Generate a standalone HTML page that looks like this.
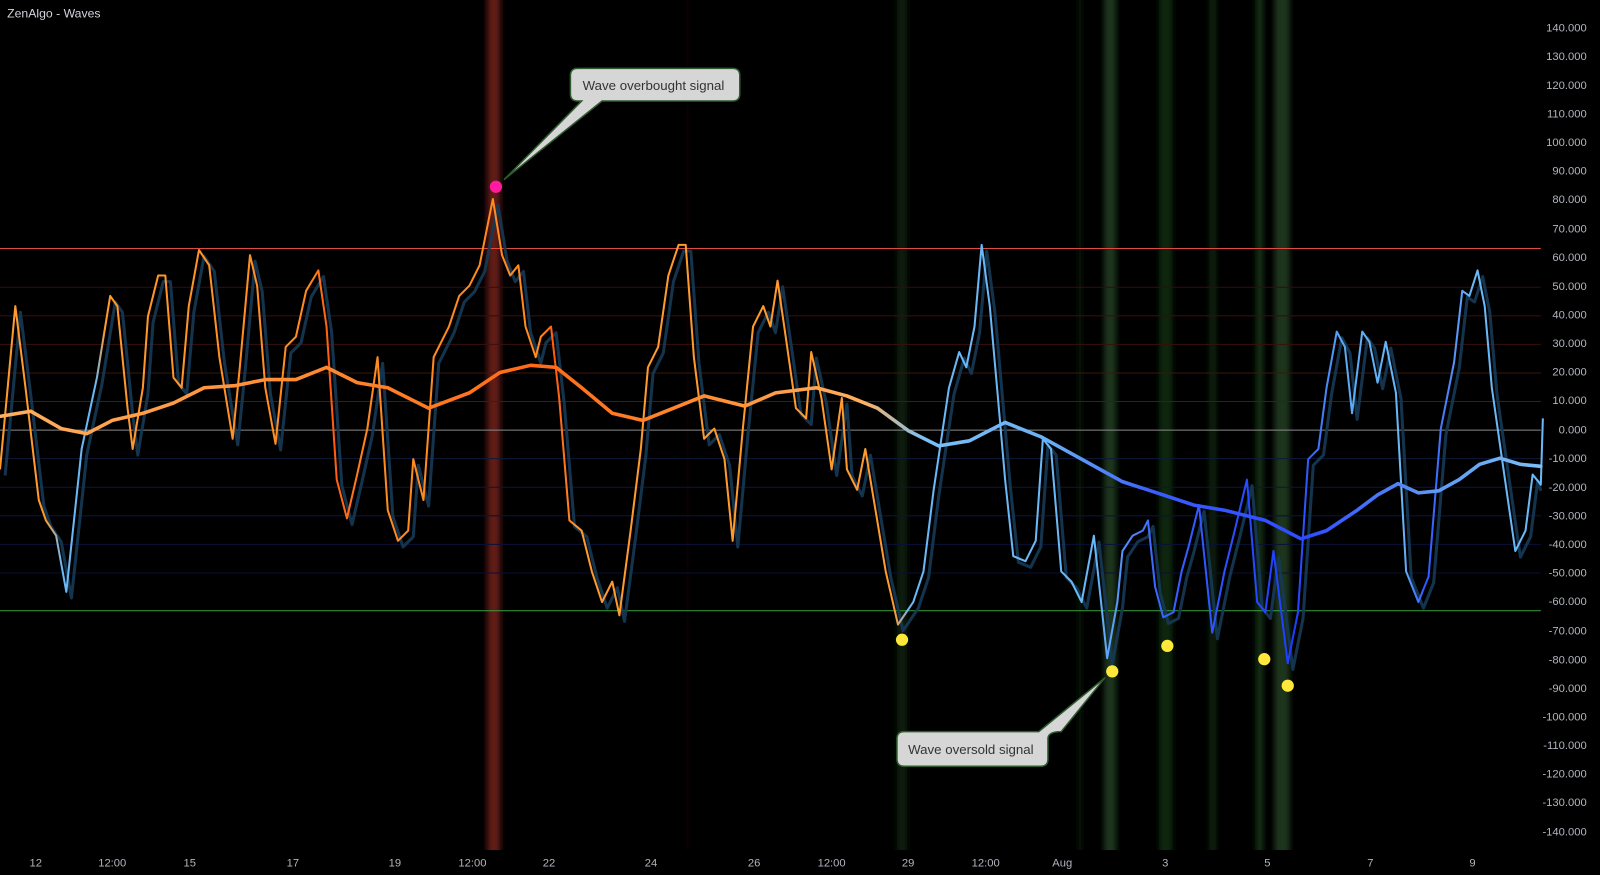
<!DOCTYPE html>
<html><head><meta charset="utf-8"><style>
html,body{margin:0;padding:0;background:#000;width:1600px;height:875px;overflow:hidden;font-family:"Liberation Sans",sans-serif}
svg{position:absolute;left:0;top:0}
</style></head><body>
<svg width="1600" height="875" viewBox="0 0 1568 857.5" preserveAspectRatio="none">
<defs>
<filter id="bl" x="-50%" y="0" width="200%" height="100%"><feGaussianBlur stdDeviation="2.5 0"/></filter>
<linearGradient id="fg" gradientUnits="userSpaceOnUse" x1="0" y1="0" x2="1510" y2="0">
<stop offset="0" stop-color="#ff9a2e"/>
<stop offset="0.03" stop-color="#ff9a2e"/>
<stop offset="0.04" stop-color="#6ab8f5"/>
<stop offset="0.062" stop-color="#6ab8f5"/>
<stop offset="0.068" stop-color="#ff9a2e"/>
<stop offset="0.2" stop-color="#ff8a20"/>
<stop offset="0.215" stop-color="#ff5a10"/>
<stop offset="0.24" stop-color="#ff8a20"/>
<stop offset="0.35" stop-color="#ff8a20"/>
<stop offset="0.36" stop-color="#ff5a10"/>
<stop offset="0.375" stop-color="#ff9a2e"/>
<stop offset="0.58" stop-color="#ff9a2e"/>
<stop offset="0.59" stop-color="#6ab8f5"/>
<stop offset="0.71" stop-color="#6ab8f5"/>
<stop offset="0.75" stop-color="#3a66ff"/>
<stop offset="0.84" stop-color="#1e3cff"/>
<stop offset="0.87" stop-color="#5aa8f5"/>
<stop offset="0.91" stop-color="#6ab8f5"/>
<stop offset="0.925" stop-color="#2e55ff"/>
<stop offset="0.955" stop-color="#6ab8f5"/>
<stop offset="1" stop-color="#6ab8f5"/>
</linearGradient>
<linearGradient id="sg" gradientUnits="userSpaceOnUse" x1="0" y1="0" x2="1510" y2="0">
<stop offset="0" stop-color="#ffb060"/>
<stop offset="0.2" stop-color="#ff8a30"/>
<stop offset="0.35" stop-color="#ff6a15"/>
<stop offset="0.45" stop-color="#ff8a30"/>
<stop offset="0.56" stop-color="#ffb060"/>
<stop offset="0.6" stop-color="#7cc0f5"/>
<stop offset="0.68" stop-color="#6ab0f5"/>
<stop offset="0.75" stop-color="#3a5cff"/>
<stop offset="0.85" stop-color="#2e4cff"/>
<stop offset="0.92" stop-color="#5a90f5"/>
<stop offset="1" stop-color="#7cc0f5"/>
</linearGradient>
</defs>
<g filter="url(#bl)">
<rect x="477" y="0" width="14" height="833" fill="#5a1a14" opacity="0.85"/>
<rect x="481" y="0" width="6" height="833" fill="#6e221a" opacity="0.8"/>
<rect x="879" y="0" width="10" height="833" fill="#0c1f0c"/>
<rect x="1082" y="0" width="12" height="833" fill="#1a341a"/>
<rect x="1136" y="0" width="13" height="833" fill="#112611"/>
<rect x="1185" y="0" width="7" height="833" fill="#0e200e"/>
<rect x="1231" y="0" width="7" height="833" fill="#163016"/>
<rect x="1249" y="0" width="15" height="833" fill="#1a341a"/>
<rect x="1056" y="0" width="5" height="833" fill="#071207"/>
<rect x="672" y="0" width="4" height="833" fill="#0a0606"/>
</g>
<g stroke-width="1">
<line x1="0" x2="1510" y1="281.5" y2="281.5" stroke="#3a0a0a"/>
<line x1="0" x2="1510" y1="309.5" y2="309.5" stroke="#3a0c0a"/>
<line x1="0" x2="1510" y1="337.5" y2="337.5" stroke="#3a100a"/>
<line x1="0" x2="1510" y1="365.5" y2="365.5" stroke="#3a180a"/>
<line x1="0" x2="1510" y1="393.5" y2="393.5" stroke="#3a200e"/>
<line x1="0" x2="1510" y1="421.5" y2="421.5" stroke="#8a8a8a"/>
<line x1="0" x2="1510" y1="449.5" y2="449.5" stroke="#0e1a3a"/>
<line x1="0" x2="1510" y1="477.5" y2="477.5" stroke="#0c163a"/>
<line x1="0" x2="1510" y1="505.5" y2="505.5" stroke="#0a123a"/>
<line x1="0" x2="1510" y1="533.5" y2="533.5" stroke="#0a103a"/>
<line x1="0" x2="1510" y1="561.5" y2="561.5" stroke="#0a0e3a"/>
<line x1="0" x2="1510" y1="243.5" y2="243.5" stroke="#e04a40"/>
<line x1="0" x2="1510" y1="598.5" y2="598.5" stroke="#3aa040"/>
</g>
<polyline fill="none" stroke="#163a55" stroke-width="3" opacity="0.9" stroke-linejoin="round" transform="translate(5,6)" points="0,460 15,300 25,380 38,490 45,510 55,525 65,580 80,440 95,370 108,290 115,300 125,400 130,440 140,380 145,310 155,270 162,270 170,370 178,380 185,300 195,245 205,260 215,350 228,430 235,360 245,250 252,280 260,380 270,435 280,340 290,330 300,285 312,265 320,320 330,470 340,508 350,465 360,420 370,350 380,500 390,530 400,520 405,450 415,490 425,350 440,320 450,290 460,280 470,260 483,195 492,250 500,270 508,260 515,320 525,350 530,330 540,320 548,390 558,510 570,520 580,560 590,590 600,570 607,603 618,520 628,440 635,360 645,340 655,270 665,240 672,240 680,350 690,430 700,420 710,450 718,530 728,420 738,320 748,300 755,320 762,275 770,330 780,400 790,410 795,345 805,390 815,460 825,390 830,460 840,480 848,440 858,500 868,560 880,612 895,590 905,560 915,480 930,380 940,345 947,360 955,320 962,240 970,300 978,390 985,470 993,545 1005,550 1015,530 1022,430 1030,440 1040,560 1050,570 1060,590 1072,525 1085,645 1095,590 1100,540 1110,525 1120,520 1125,510 1132,575 1140,605 1150,600 1158,560 1165,535 1175,495 1188,620 1200,560 1210,520 1222,470 1232,590 1240,600 1248,540 1262,650 1272,600 1282,450 1292,440 1300,380 1310,325 1318,340 1325,405 1335,325 1342,335 1350,375 1358,335 1368,385 1378,560 1390,590 1400,565 1412,420 1425,355 1433,285 1440,290 1448,265 1455,300 1462,380 1472,450 1485,540 1495,520 1502,465 1505,475"/>
<polyline fill="none" stroke="url(#fg)" stroke-width="2" stroke-linejoin="round" points="0,460 15,300 25,380 38,490 45,510 55,525 65,580 80,440 95,370 108,290 115,300 125,400 130,440 140,380 145,310 155,270 162,270 170,370 178,380 185,300 195,245 205,260 215,350 228,430 235,360 245,250 252,280 260,380 270,435 280,340 290,330 300,285 312,265 320,320 330,470 340,508 350,465 360,420 370,350 380,500 390,530 400,520 405,450 415,490 425,350 440,320 450,290 460,280 470,260 483,195 492,250 500,270 508,260 515,320 525,350 530,330 540,320 548,390 558,510 570,520 580,560 590,590 600,570 607,603 618,520 628,440 635,360 645,340 655,270 665,240 672,240 680,350 690,430 700,420 710,450 718,530 728,420 738,320 748,300 755,320 762,275 770,330 780,400 790,410 795,345 805,390 815,460 825,390 830,460 840,480 848,440 858,500 868,560 880,612 895,590 905,560 915,480 930,380 940,345 947,360 955,320 962,240 970,300 978,390 985,470 993,545 1005,550 1015,530 1022,430 1030,440 1040,560 1050,570 1060,590 1072,525 1085,645 1095,590 1100,540 1110,525 1120,520 1125,510 1132,575 1140,605 1150,600 1158,560 1165,535 1175,495 1188,620 1200,560 1210,520 1222,470 1232,590 1240,600 1248,540 1262,650 1272,600 1282,450 1292,440 1300,380 1310,325 1318,340 1325,405 1335,325 1342,335 1350,375 1358,335 1368,385 1378,560 1390,590 1400,565 1412,420 1425,355 1433,285 1440,290 1448,265 1455,300 1462,380 1472,450 1485,540 1495,520 1502,465 1510,475 1512,410"/>
<polyline fill="none" stroke="url(#sg)" stroke-width="3.5" stroke-linejoin="round" stroke-linecap="round" points="0,408 30,403 60,420 85,425 110,412 140,405 170,395 200,380 230,378 260,372 290,372 320,360 350,375 380,380 420,400 460,385 490,365 520,358 545,360 570,380 600,405 630,412 660,400 690,388 730,398 760,385 800,380 830,388 860,400 890,422 920,437 950,432 985,414 1020,428 1060,450 1100,472 1140,485 1170,495 1200,500 1240,510 1275,528 1300,520 1330,500 1350,485 1370,474 1390,483 1410,481 1430,470 1450,455 1470,449 1490,455 1510,457"/>
<circle cx="486" cy="183" r="6" fill="#ff1aa0"/>
<g fill="#ffe83a">
<circle cx="884" cy="627" r="6"/><circle cx="1090" cy="658" r="6"/><circle cx="1144" cy="633" r="6"/><circle cx="1239" cy="646" r="6"/><circle cx="1262" cy="672" r="6"/>
</g>
<path d="M566,67 H718 Q725,67 725,74 V92 Q725,99 718,99 H590 L494,176 L570,99 H566 Q559,99 559,92 V74 Q559,67 566,67 Z" fill="#d6d6d6" stroke="#2e5a2e" stroke-width="1.5"/>
<text x="571" y="88" font-size="13" fill="#333">Wave overbought signal</text>
<path d="M886,717 H1018 L1083,664 L1040,717 Q1027,717 1027,724 V744 Q1027,751 1020,751 H886 Q879,751 879,744 V724 Q879,717 886,717 Z" fill="#d6d6d6" stroke="#2e5a2e" stroke-width="1.5"/>
<text x="890" y="739" font-size="13" fill="#333">Wave oversold signal</text>
<text x="7" y="17" font-size="12" fill="#d1d4dc">ZenAlgo - Waves</text>
<g font-size="11" fill="#b2b5be" text-anchor="end">
<text x="1555" y="31">140.000</text><text x="1555" y="59">130.000</text><text x="1555" y="87">120.000</text><text x="1555" y="115">110.000</text><text x="1555" y="143">100.000</text><text x="1555" y="171">90.000</text><text x="1555" y="199">80.000</text><text x="1555" y="228">70.000</text><text x="1555" y="256">60.000</text><text x="1555" y="284">50.000</text><text x="1555" y="312">40.000</text><text x="1555" y="340">30.000</text><text x="1555" y="368">20.000</text><text x="1555" y="396">10.000</text><text x="1555" y="425">0.000</text><text x="1555" y="453">-10.000</text><text x="1555" y="481">-20.000</text><text x="1555" y="509">-30.000</text><text x="1555" y="537">-40.000</text><text x="1555" y="565">-50.000</text><text x="1555" y="593">-60.000</text><text x="1555" y="622">-70.000</text><text x="1555" y="650">-80.000</text><text x="1555" y="678">-90.000</text><text x="1555" y="706">-100.000</text><text x="1555" y="734">-110.000</text><text x="1555" y="762">-120.000</text><text x="1555" y="790">-130.000</text><text x="1555" y="819">-140.000</text>
</g>
<g font-size="11" fill="#b2b5be" text-anchor="middle">
<text x="35" y="849">12</text><text x="110" y="849">12:00</text><text x="186" y="849">15</text><text x="287" y="849">17</text><text x="387" y="849">19</text><text x="463" y="849">12:00</text><text x="538" y="849">22</text><text x="638" y="849">24</text><text x="739" y="849">26</text><text x="815" y="849">12:00</text><text x="890" y="849">29</text><text x="966" y="849">12:00</text><text x="1041" y="849">Aug</text><text x="1142" y="849">3</text><text x="1242" y="849">5</text><text x="1343" y="849">7</text><text x="1443" y="849">9</text>
</g>
</svg>
</body></html>
